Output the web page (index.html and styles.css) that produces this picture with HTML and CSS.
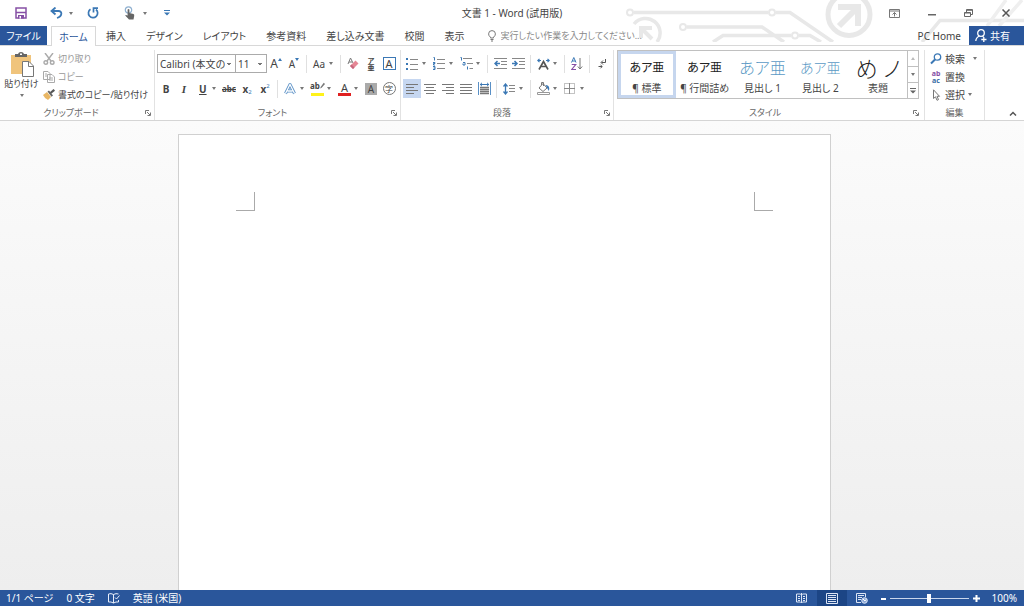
FILE: index.html
```html
<!DOCTYPE html>
<html lang="ja">
<head>
<meta charset="utf-8">
<meta name="viewport" content="width=device-width, initial-scale=1">
<title>文書 1 - Word</title>
<link rel="stylesheet" href="styles.css">
</head>
<body>
<header class="top">
  <svg class="circuit" viewBox="0 0 404 42" fill="none" stroke="#e8e8e8" stroke-width="3.500" aria-hidden="true">
    <path d="M14 12.500H148M156 12.500H170L213 42M67 27H142L164 42M93 42L103 35.500H171M179 35.500H190L201 42M302 42L320 20.500H404"/>
    <path d="M367 26L386 0M379 26L402 0" stroke="#efefef"/>
    <g stroke-width="2"><circle cx="10" cy="12.500" r="3"/><circle cx="152" cy="12.500" r="3"/><circle cx="63" cy="27" r="3"/><circle cx="175" cy="35.500" r="3"/></g>
    <circle cx="229" cy="14.500" r="21" stroke-width="5"/>
    <path d="M218 7H238V26M237 8L219 26" stroke-width="6"/>
    <path d="M14 24A14 14 0 0 1 37 42"/>
    <path d="M21 38V28H32M22 29L32 39" stroke-width="4"/>
  </svg>
  <div class="titlebar">
    <div class="quick">
      <button class="qbtn" aria-label="保存"><svg width="12" height="12" viewBox="0 0 12 12"><path d="M1 1H11V11H1Z" fill="#fff" stroke="#8650a5" stroke-width="1.500"/><path d="M1 5.500H11" stroke="#8650a5" stroke-width="1.500"/><path d="M3 8H9V11.500H3Z" fill="#8650a5"/><path d="M4.500 9H6V11.500H4.500Z" fill="#fff"/></svg></button>
      <button class="qbtn undo" aria-label="元に戻す"><svg width="13" height="12" viewBox="0 0 13 12" fill="none" stroke="#3b78b5" stroke-width="1.800"><path d="M5.500 .5L1.500 4L5.500 7.500M2 4H8.500C12.500 4 12.500 9.500 7 11"/></svg></button>
      <button class="qcaret" aria-label="元に戻す一覧"><i class="caret"></i></button>
      <button class="qbtn redo" aria-label="繰り返し"><svg width="12" height="12" viewBox="0 0 12 12" fill="none" stroke="#3b78b5" stroke-width="1.700"><path d="M3.500 2.200A4.600 4.600 0 1 0 9 2.500M6.500 5.500V1.200H11"/></svg></button>
      <button class="qbtn touch" aria-label="タッチ/マウス モードの切り替え"><svg width="12" height="14" viewBox="0 0 12 14"><circle cx="4.500" cy="4" r="3.200" fill="none" stroke="#8fb0d0" stroke-width="1.200"/><path d="M3.600 3.500Q4.500 2.500 5.400 3.500V7L9.500 8Q10.500 8.500 10.200 10L9.500 13.500H5L1.200 9.500Q1.500 8.300 3.600 9.500Z" fill="#666"/></svg></button>
      <button class="qcaret" aria-label="モード一覧"><i class="caret"></i></button>
      <button class="qbtn" aria-label="クイック アクセス ツール バーのカスタマイズ"><svg width="6" height="6" viewBox="0 0 6 6"><path d="M0 0H6V1H0ZM0 2.500H6L3 5.500Z" fill="#3b78b5"/></svg></button>
    </div>
    <h1 class="title">文書 1 - Word (試用版)</h1>
    <div class="window">
      <button aria-label="リボンの表示オプション"><svg width="11" height="9" viewBox="0 0 11 9" fill="none" stroke="#777"><path d="M.5 .5H10.500V8.500H.5ZM.5 2H10.500M5.500 7.500V3.500M3.500 5.500L5.500 3.500L7.500 5.500"/></svg></button>
      <button aria-label="最小化"><svg width="8" height="9" viewBox="0 0 8 9"><path d="M0 5H8V6.500H0Z" fill="#666"/></svg></button>
      <button aria-label="元に戻す (縮小)"><svg width="9" height="8" viewBox="0 0 9 8" fill="none" stroke="#666"><path d="M.5 3.500H6.500V7.500H.5ZM2.500 3V.5H8.500V5.500H7M2.500 1.300H8.500M.5 4H6.500"/></svg></button>
      <button aria-label="閉じる"><svg width="8" height="8" viewBox="0 0 8 8"><path d="M.5 .5L7.500 7.500M7.500 .5L.5 7.500" stroke="#555" stroke-width="1.500"/></svg></button>
    </div>
  </div>
  <nav class="tabs">
    <button class="file">ファイル</button>
    <button class="tab active">ホーム</button>
    <button class="tab">挿入</button>
    <button class="tab">デザイン</button>
    <button class="tab">レイアウト</button>
    <button class="tab">参考資料</button>
    <button class="tab">差し込み文書</button>
    <button class="tab">校閲</button>
    <button class="tab">表示</button>
    <label class="tell"><svg width="8" height="12" viewBox="0 0 8 12" fill="none" stroke="#777"><path d="M2.500 8V7.200Q.6 5.800 .6 3.900A3.400 3.300 0 0 1 7.400 3.900Q7.400 5.800 5.500 7.200V8ZM2.500 9.500H5.500M3 11H5"/></svg><input type="text" placeholder="実行したい作業を入力してください..." aria-label="操作アシスト"></label>
    <a class="account" href="#">PC Home</a>
    <button class="share"><svg width="12" height="13" viewBox="0 0 12 13" fill="none" stroke="#fff" stroke-width="1.300"><circle cx="6" cy="4" r="3.300"/><path d="M4.500 7Q1 8.500 .8 12M7.500 7.300L8.500 8M8.800 8V13M6.300 10.500H11.500"/></svg>共有</button>
  </nav>
</header>

<section class="ribbon" aria-label="リボン">
  <div class="group clipboard">
    <div class="body clip">
      <button class="paste"><svg width="24" height="25" viewBox="0 0 24 25"><path d="M1 3H21V22H1Z" fill="#f0c47c"/><path d="M5 2H8Q8.500 0 11 0T14 2H17V5H5Z" fill="#666"/><path d="M10 1.500H12V3H10Z" fill="#fff"/><path d="M12.500 9.500H19L23.500 14V24.500H12.500Z" fill="#fff" stroke="#777"/><path d="M18.500 9.500V14.500H23.500" fill="none" stroke="#777"/></svg><span>貼り付け</span><i class="caret"></i></button>
      <div class="stack">
        <button class="cmd off"><svg width="12" height="12" viewBox="0 0 12 12" fill="none" stroke="#aaa" stroke-width="1.400"><path d="M2 0L8 8M10 0L4 8"/><circle cx="2.800" cy="9.500" r="1.800"/><circle cx="9.200" cy="9.500" r="1.800"/></svg>切り取り</button>
        <button class="cmd off"><svg width="12" height="12" viewBox="0 0 12 12" fill="#fff" stroke="#aaa"><path d="M.5 .5H5L7 2.500V8.500H.5ZM4.500 3.500H9L11.500 6V11.500H4.500ZM2 3H4M2 5H4M6 7H10M6 9H10"/></svg>コピー</button>
        <button class="cmd"><svg width="12" height="12" viewBox="0 0 12 12"><path d="M0 6L4 3L8 8L5 11Q2 10 0 6Z" fill="#e9b765"/><path d="M4.500 2.500L6 1.500L10 6.500L8.500 7.700Z" fill="#666"/><path d="M7.500 4L11.300 .8" stroke="#555" stroke-width="2.200"/></svg>書式のコピー/貼り付け</button>
      </div>
    </div>
    <div class="caption"><span>クリップボード</span><button class="launch" aria-label="クリップボードの詳細"><svg width="6" height="6" viewBox="0 0 6 6"><path d="M.5 4V.5H4M2 2L5 5M5.500 2.500V5.500H2.500" fill="none" stroke="#777"/></svg></button></div>
  </div>

  <div class="group font">
    <div class="body rows">
      <div class="row">
        <select class="pick family" aria-label="フォント"><option>Calibri (本文の</option></select>
        <select class="pick size" aria-label="フォント サイズ"><option>11</option></select>
        <button class="tool" aria-label="フォント サイズの拡大"><span class="g12">A</span><svg class="up" width="4" height="3" viewBox="0 0 4 3"><path d="M0 3L2 0L4 3Z" fill="#3b78b5"/></svg></button>
        <button class="tool" aria-label="フォント サイズの縮小"><span class="g10">A</span><svg class="up" width="4" height="3" viewBox="0 0 4 3"><path d="M0 0L2 3L4 0Z" fill="#3b78b5"/></svg></button>
        <i class="sep"></i>
        <button class="split" aria-label="文字種の変換"><span class="g10">Aa</span><i class="caret"></i></button>
        <i class="sep"></i>
        <button class="tool" aria-label="書式のクリア"><svg width="12" height="13" viewBox="0 0 12 13"><path d="M1 7L3.500 1L6 6M2 5H5" fill="none" stroke="#777"/><path d="M3 9L8.500 3.500L11.500 6.500L6 12Z" fill="#e58795"/><path d="M3 9L4.500 7.500L7.500 10.500L6 12Z" fill="#c6677e"/></svg></button>
        <button class="tool ruby" aria-label="ルビ"><span>ア</span><span>亜</span></button>
        <button class="tool" aria-label="囲み線"><span class="boxed">A</span></button>
      </div>
      <div class="row">
        <button class="tool" aria-label="太字"><b class="g10">B</b></button>
        <button class="tool" aria-label="斜体"><em class="g11 serif">I</em></button>
        <button class="split" aria-label="下線"><b class="g10 under">U</b><i class="caret"></i></button>
        <button class="tool" aria-label="取り消し線"><b class="g8 strike">abc</b></button>
        <button class="tool" aria-label="下付き"><b class="g10">x</b><sub>2</sub></button>
        <button class="tool" aria-label="上付き"><b class="g10">x</b><sup>2</sup></button>
        <i class="sep"></i>
        <button class="split" aria-label="文字の効果"><svg width="12" height="12" viewBox="0 0 12 12"><path d="M1.500 10.500L6 1.500L10.500 10.500M3.500 8H8.500" fill="none" stroke="#5a90c6" stroke-width="3"/><path d="M1.500 10.500L6 1.500L10.500 10.500M3.500 8H8.500" fill="none" stroke="#fff" stroke-width="1.300"/></svg><i class="caret"></i></button>
        <button class="split" aria-label="蛍光ペンの色"><span class="ink yellow"><b>ab</b><svg width="5" height="8" viewBox="0 0 6 8"><path d="M0 7L1 5L4.500 0L6 1.500L2 6Z" fill="#777"/></svg></span><i class="caret"></i></button>
        <button class="split" aria-label="フォントの色"><span class="ink red"><span class="g11">A</span></span><i class="caret"></i></button>
        <button class="tool" aria-label="文字の網かけ"><span class="shade">A</span></button>
        <button class="tool" aria-label="囲い文字"><span class="ring">字</span></button>
      </div>
    </div>
    <div class="caption"><span>フォント</span><button class="launch" aria-label="フォントの詳細"><svg width="6" height="6" viewBox="0 0 6 6"><path d="M.5 4V.5H4M2 2L5 5M5.500 2.500V5.500H2.500" fill="none" stroke="#777"/></svg></button></div>
  </div>

  <div class="group paragraph">
    <div class="body rows">
      <div class="row">
        <button class="split" aria-label="箇条書き"><svg width="12" height="12" viewBox="0 0 12 12"><path d="M0 0H2V2H0ZM0 5H2V7H0ZM0 10H2V12H0Z" fill="#3b78b5"/><path d="M4 1.500H12M4 6.500H12M4 11.500H12" stroke="#888"/></svg><i class="caret"></i></button>
        <button class="split" aria-label="段落番号"><svg width="12" height="13" viewBox="0 0 12 13"><path d="M.5 .5H1.500V3.500M0 5.500H2V6.500H.5V8H2M0 9.500H2V12.500H0M.5 11H2" fill="none" stroke="#3b78b5"/><path d="M4 2.500H12M4 6.500H12M4 11.500H12" stroke="#888"/></svg><i class="caret"></i></button>
        <button class="split" aria-label="アウトライン"><svg width="14" height="13" viewBox="0 0 14 13"><path d="M.5 .5H1.500V3.500M3 5.500H5V8H3V6.500M7.500 9.500V12.500" fill="none" stroke="#3b78b5"/><path d="M3 1.500H12M7 6.500H13M9.500 11.500H13" stroke="#888"/></svg><i class="caret"></i></button>
        <i class="sep"></i>
        <button class="tool" aria-label="インデントを減らす"><svg width="13" height="11" viewBox="0 0 13 11"><path d="M0 .5H13M7 3.500H13M7 6.500H13M0 10.500H13" stroke="#888"/><path d="M6 5.500H1M3.500 3L1 5.500L3.500 8" stroke="#3b78b5" stroke-width="1.500" fill="none"/></svg></button>
        <button class="tool" aria-label="インデントを増やす"><svg width="13" height="11" viewBox="0 0 13 11"><path d="M0 .5H13M7 3.500H13M7 6.500H13M0 10.500H13" stroke="#888"/><path d="M0 5.500H5M2.500 3L5 5.500L2.500 8" stroke="#3b78b5" stroke-width="1.500" fill="none"/></svg></button>
        <i class="sep"></i>
        <button class="split" aria-label="拡張書式"><svg width="13" height="12" viewBox="0 0 13 12" fill="none"><path d="M2 11.500L6.500 3.500L11 11.500M3.500 8.500H9.500" stroke="#555" stroke-width="1.600"/><path d="M4 2.500H.8M2.500 .8L.8 2.500L2.500 4.200M9 2.500H12.200M10.500 .8L12.200 2.500L10.500 4.200" stroke="#3b78b5" stroke-width="1.200"/></svg><i class="caret"></i></button>
        <i class="sep"></i>
        <button class="tool" aria-label="並べ替え"><svg width="12" height="13" viewBox="0 0 12 13" fill="none"><path d="M.5 5.500L2.800 .5L5 5.500M1.300 4H4.300" stroke="#3b78b5"/><path d="M.7 7.500H4.700L.7 12.500H5" stroke="#8650a5" stroke-width="1.200"/><path d="M9 1V12M6.800 9.500L9 12L11.200 9.500" stroke="#777"/></svg></button>
        <i class="sep"></i>
        <button class="tool" aria-label="編集記号の表示/非表示"><svg width="8" height="11" viewBox="0 0 8 11" fill="none" stroke="#555"><path d="M7.500 1V4.500H3.500M5 2.500L3 4.500L5 6.500M4 8.500H.5M2.500 7L4.200 8.500L2.500 10.300"/></svg></button>
      </div>
      <div class="row">
        <button class="tool on" aria-label="左揃え"><svg width="12" height="10" viewBox="0 0 12 10"><path d="M0 .5H12M0 3.500H8M0 6.500H12M0 9.500H8" stroke="#777"/></svg></button>
        <button class="tool" aria-label="中央揃え"><svg width="12" height="10" viewBox="0 0 12 10"><path d="M0 .5H12M2 3.500H10M0 6.500H12M2 9.500H10" stroke="#777"/></svg></button>
        <button class="tool" aria-label="右揃え"><svg width="12" height="10" viewBox="0 0 12 10"><path d="M0 .5H12M4 3.500H12M0 6.500H12M4 9.500H12" stroke="#777"/></svg></button>
        <button class="tool" aria-label="両端揃え"><svg width="12" height="10" viewBox="0 0 12 10"><path d="M0 .5H12M0 3.500H12M0 6.500H12M0 9.500H12" stroke="#777"/></svg></button>
        <button class="tool" aria-label="均等割り付け"><svg width="13" height="13" viewBox="0 0 13 13" fill="none"><path d="M.5 0V13M12.500 0V13" stroke="#5a90c6"/><path d="M2 5.500H11M2 7.500H11M2 9.500H11M2 11.500H11" stroke="#777" stroke-width="1.300"/><path d="M2 2.500H11M4 .8L2.200 2.500L4 4.200M9 .8L10.800 2.500L9 4.200" stroke="#3b78b5"/></svg></button>
        <i class="sep"></i>
        <button class="split" aria-label="行と段落の間隔"><svg width="12" height="12" viewBox="0 0 12 12" fill="none"><path d="M2.500 1V11M.5 3.500L2.500 1L4.500 3.500M.5 8.500L2.500 11L4.500 8.500" stroke="#3b78b5" stroke-width="1.300"/><path d="M6 2.500H12M6 5.500H12M6 8.500H12" stroke="#888"/></svg><i class="caret"></i></button>
        <i class="sep"></i>
        <button class="split" aria-label="塗りつぶし"><svg width="13" height="13" viewBox="0 0 13 13" fill="none"><path d="M2 6L6 1.500L10 6L6 9.500ZM4.500 3V.5H6.500V4" stroke="#777"/><path d="M8.500 3Q13.500 3.500 11.800 9Z" fill="#3b78b5"/><path d="M.5 10.500H12.500V12.500H.5Z" fill="#fff" stroke="#999"/></svg><i class="caret"></i></button>
        <button class="split" aria-label="罫線"><svg width="11" height="11" viewBox="0 0 11 11" fill="none" stroke="#888"><path d="M.5 .5H10.500V10.500H.5Z" stroke-dasharray="1 1"/><path d="M5.500 0V11M0 5.500H11"/></svg><i class="caret"></i></button>
      </div>
    </div>
    <div class="caption"><span>段落</span><button class="launch" aria-label="段落の詳細"><svg width="6" height="6" viewBox="0 0 6 6"><path d="M.5 4V.5H4M2 2L5 5M5.500 2.500V5.500H2.500" fill="none" stroke="#777"/></svg></button></div>
  </div>

  <div class="group styles">
    <div class="body">
      <div class="gallery">
        <button class="style chosen"><span class="sample">あア亜</span><span>¶ 標準</span></button>
        <button class="style"><span class="sample">あア亜</span><span>¶ 行間詰め</span></button>
        <button class="style"><span class="sample h1">あア亜</span><span>見出し 1</span></button>
        <button class="style"><span class="sample h2">あア亜</span><span>見出し 2</span></button>
        <button class="style"><span class="sample big">め ノ</span><span>表題</span></button>
        <div class="scroll">
          <button aria-label="前の行" disabled><i class="caret flip"></i></button>
          <button aria-label="次の行"><i class="caret"></i></button>
          <button aria-label="その他"><svg width="6" height="6" viewBox="0 0 6 6"><path d="M0 0H6V1H0ZM0 2.500H6L3 5.500Z" fill="#666"/></svg></button>
        </div>
      </div>
    </div>
    <div class="caption"><span>スタイル</span><button class="launch" aria-label="スタイルの詳細"><svg width="6" height="6" viewBox="0 0 6 6"><path d="M.5 4V.5H4M2 2L5 5M5.500 2.500V5.500H2.500" fill="none" stroke="#777"/></svg></button></div>
  </div>

  <div class="group editing">
    <div class="body stack">
      <button class="cmd"><svg width="12" height="12" viewBox="0 0 12 12" fill="none" stroke="#3b78b5"><circle cx="7.500" cy="4" r="3.200" stroke-width="1.300"/><path d="M5 6.500L1 10.500" stroke-width="2"/></svg>検索<i class="caret far"></i></button>
      <button class="cmd"><span class="swap"><b>ab</b><b>ac</b></span>置換</button>
      <button class="cmd"><svg width="12" height="12" viewBox="0 0 12 12" fill="#fff" stroke="#777"><path d="M3.500 .8V9.500L5.500 7.800L7 11.300L8.500 10.600L7 7.300H9.500Z"/></svg>選択<i class="caret"></i></button>
    </div>
    <div class="caption"><span>編集</span></div>
  </div>
  <button class="collapse" aria-label="リボンを折りたたむ"><svg width="8" height="5" viewBox="0 0 8 5"><path d="M1 4.500L4 1.500L7 4.500" fill="none" stroke="#555" stroke-width="1.500"/></svg></button>
</section>

<main class="workspace">
  <article class="page" contenteditable="true" aria-label="文書"><i class="mark left"></i><i class="mark right"></i></article>
</main>

<footer class="status">
  <span>1/1 ページ</span>
  <span>0 文字</span>
  <button class="proof" aria-label="文章校正"><svg width="12" height="11" viewBox="0 0 12 11" fill="none" stroke="#e8eefa"><path d="M5.500 1.500Q3 0 .5 1V9Q3 8.500 5.500 10Q8 8.500 10.500 9V7M5.500 1.500V10M5.500 1.500Q8 0 10.500 1M7 4.500L8.500 6L11.500 2.500"/></svg></button>
  <span>英語 (米国)</span>
  <div class="views">
    <button aria-label="閲覧モード"><svg width="11" height="10" viewBox="0 0 11 10" fill="none" stroke="#dce5f5"><path d="M.5 1H4.500L5.500 2L6.500 1H10.500V9H6.500L5.500 10L4.500 9H.5ZM5.500 0V10M2 3.500H4M2 5.500H4M2 7.500H4M7 3.500H9M7 5.500H9M7 7.500H9"/></svg></button>
    <button class="current" aria-label="印刷レイアウト"><svg width="12" height="11" viewBox="0 0 12 11" fill="none" stroke="#dce5f5"><path d="M.5 .5H11.500V10.500H.5ZM2 2.500H10M2 4.500H10M2 6.500H10M2 8.500H10"/></svg></button>
    <button aria-label="Web レイアウト"><svg width="12" height="11" viewBox="0 0 12 11" fill="none" stroke="#dce5f5"><path d="M5 9.500H.5V.5H9.500V4M2 2.500H8M2 4.500H6M2 6.500H5"/><circle cx="8.500" cy="7.500" r="2.800" fill="#8fabd8"/><path d="M7 6L9 8L10 6.500" stroke="#fff"/></svg></button>
  </div>
  <div class="zoom">
    <button aria-label="縮小"><svg width="5" height="7" viewBox="0 0 5 7"><path d="M0 3H5V5H0Z" fill="#fff"/></svg></button>
    <input type="range" min="0" max="200" value="100" aria-label="ズーム">
    <button aria-label="拡大"><svg width="7" height="7" viewBox="0 0 7 7"><path d="M0 3.500H7M3.500 0V7" stroke="#fff" stroke-width="2"/></svg></button>
  </div>
  <span>100%</span>
</footer>
</body>
</html>
```

FILE: styles.css
```css
* { box-sizing: border-box; }

body {
  display: flex;
  flex-direction: column;
  height: 100vh;
  margin: 0;
  overflow: hidden;
  background: #fff;
  color: #444;
  font: 10px/14px "Noto Sans", "Noto Sans CJK JP", sans-serif;
  font-feature-settings: "palt";
}

button, input, select {
  margin: 0;
  padding: 0;
  border: 0;
  border-radius: 0;
  background: none;
  color: inherit;
  font: inherit;
  font-feature-settings: inherit;
}

button {
  display: flex;
  align-items: center;
  justify-content: center;
  white-space: nowrap;
}

svg { display: block; flex: none; }
a { color: inherit; text-decoration: none; }

.caret {
  flex: none;
  border: 2px solid transparent;
  border-top: 3px solid #777;
  border-bottom: 0;
}
.caret.flip { border-top: 0; border-bottom: 3px solid #bbb; }

/* Title bar */
.top { position: relative; flex: none; }
.circuit { position: absolute; top: 0; right: 0; width: 404px; height: 42px; }
.titlebar, .tabs { position: relative; display: flex; }
.titlebar {
  display: grid;
  grid-template-columns: 1fr auto 1fr;
  align-items: center;
  height: 26px;
}
.quick { display: flex; align-items: center; padding-left: 12px; }
.qbtn { width: 18px; height: 22px; }
.qbtn.undo { margin-left: 17px; }
.qbtn.redo { margin-left: 7px; }
.qbtn.touch { margin-left: 19px; }
.qcaret { width: 12px; height: 22px; }
.qcaret + .qbtn:last-child { margin-left: 7px; }
.title { margin: 0; font-size: 10px; font-weight: 400; }
.window { display: flex; justify-content: flex-end; }
.window button { width: 37px; height: 24px; }

/* Tabs */
.tabs { align-items: stretch; height: 20px; border-bottom: 1px solid #d8d8d8; }
.file { width: 47px; margin-right: 4px; background: #2a569b; color: #fff; }
.tab { padding: 0 10px; }
.tab.active {
  width: 45px;
  height: 20px;
  border: 1px solid #d8d8d8;
  border-bottom: 0;
  background: #fff;
  color: #2a569b;
}
.tell { display: flex; flex: 1; align-items: center; gap: 5px; padding-left: 13px; font-size: 9px; }
.tell input { flex: 1; max-width: 160px; min-width: 0; height: 18px; }
.tell input::placeholder { color: #888; opacity: 1; }
.account { align-self: center; margin-right: 8px; }
.share { gap: 3px; width: 55px; padding-right: 8px; background: #2a569b; color: #fff; }

/* Ribbon */
.ribbon { display: flex; flex: none; height: 75px; padding-top: 4px; border-bottom: 1px solid #d5d5d5; }
.group { display: flex; flex-direction: column; border-right: 1px solid #e2e2e2; }
.body { flex: 1; min-height: 0; }
.clipboard { width: 155px; }
.font { width: 246px; padding-left: 2px; }
.paragraph { width: 213px; padding-left: 2px; }
.styles { flex: 1; min-width: 0; padding: 0 5px 0 3px; }
.editing { width: 60px; }
.caption { display: flex; align-items: center; height: 15px; color: #666; font-size: 9px; }
.caption span { flex: 1; text-align: center; }
.launch { width: 12px; height: 12px; }
.styles .launch { width: 6px; }

.clip { display: flex; }
.paste { flex: none; flex-direction: column; justify-content: flex-start; width: 43px; padding-top: 2px; font-size: 9px; }
.paste span { line-height: 14px; }
.paste .caret { margin-top: 3px; }
.stack { display: flex; flex-direction: column; gap: 1px; }
.cmd { justify-content: flex-start; gap: 3px; height: 17px; }
.clip .cmd { font-size: 9px; }
.cmd.off { color: #999; }
.far { margin-left: 5px; }
.editing .stack { padding-left: 5px; }
.swap { display: flex; flex-direction: column; width: 12px; font-size: 7px; line-height: 7px; color: #8650a5; }
.swap b:last-child { color: #3b6ea5; }

.rows { display: flex; flex-direction: column; gap: 6px; padding-top: 4px; }
.row { display: flex; align-items: center; height: 19px; }
.tool { position: relative; width: 18px; height: 19px; }
.tool.on { background: #c6d7f1; }
.split { width: 27px; height: 19px; justify-content: space-between; padding: 0 4px 0 3px; }
.sep { width: 1px; height: 18px; margin: 0 3px; background: #e0e0e0; }
.pick {
  height: 19px;
  padding: 0 10px 0 2px;
  border: 1px solid #ababab;
  background: linear-gradient(#777, #777) right 4px top 8px / 4px 1px no-repeat,
    linear-gradient(#777, #777) right 5px top 9px / 2px 1px no-repeat, #fff;
  appearance: none;
}
.family { width: 79px; }
.size { width: 32px; margin-left: -1px; }
.g8 { font-size: 8px; }
.g10 { font-size: 10px; }
.g11 { font-size: 11px; }
.g12 { font-size: 12px; }
.serif { font-family: "Liberation Serif", serif; font-weight: 700; }
.under { margin-left: 3px; text-decoration: underline; }
.strike { text-decoration: line-through; }
.up { align-self: flex-start; margin-top: 4px; }
sub, sup { font-size: 6px; line-height: 6px; color: #3b78b5; }
sub { align-self: flex-end; margin-bottom: 3px; }
sup { align-self: flex-start; margin-top: 4px; }
.ruby { flex-direction: column; font-size: 7px; line-height: 7px; font-weight: 700; }
.boxed { width: 13px; border: 1px solid #3b78b5; font-size: 11px; line-height: 11px; text-align: center; }
.shade { width: 12px; background: #aaa; font-size: 10px; line-height: 12px; text-align: center; }
.ring { width: 13px; border: 1px solid #777; border-radius: 50%; font-size: 8px; line-height: 11px; text-align: center; }
.ink { display: flex; justify-content: center; width: 13px; height: 14px; border-bottom: 3px solid; line-height: 11px; }
.ink b { font-size: 8px; line-height: 8px; }
.ink.yellow { border-color: #fff21a; }
.ink.red { border-color: #e02020; }

/* Style gallery */
.gallery { display: flex; height: 49px; border: 1px solid #c0c0c0; }
.style { flex: 1; flex-direction: column; min-width: 0; overflow: hidden; border: 3px solid transparent; }
.style.chosen { border-color: #c6d6ee; }
.sample { display: flex; align-items: center; height: 26px; color: #222; font-size: 12px; }
.sample.h1 { color: #5b9ac5; font-size: 16px; font-weight: 300; }
.sample.h2 { color: #5b9ac5; font-size: 14px; font-weight: 300; }
.sample.big { font-size: 22px; line-height: 22px; font-weight: 300; }
.scroll { display: flex; flex-direction: column; width: 11px; border-left: 1px solid #c0c0c0; }
.scroll button { flex: 1; }
.scroll button + button { border-top: 1px solid #c0c0c0; }
.collapse { align-self: flex-end; width: 39px; height: 14px; padding-left: 16px; }

/* Document */
.workspace {
  display: flex;
  flex: 1;
  justify-content: center;
  min-height: 0;
  padding: 13px 15px 0 0;
  background: linear-gradient(#fbfbfb, #eee);
}
.page {
  display: flex;
  justify-content: space-between;
  width: 100%;
  max-width: 653px;
  padding: 57px;
  border: 1px solid #d0d0d0;
  border-bottom: 0;
  background: #fff;
}
.mark { width: 19px; height: 19px; border-bottom: 1px solid #aaa; }
.mark.left { border-right: 1px solid #aaa; }
.mark.right { border-left: 1px solid #aaa; }

/* Status bar */
.status {
  display: flex;
  flex: none;
  align-items: center;
  gap: 13px;
  height: 16px;
  padding: 0 7px 0 6px;
  background: #2a569b;
  color: #fff;
}
.views { display: flex; margin-left: auto; }
.views button { width: 30px; height: 16px; }
.views .current { background: #1c4585; }
.zoom { display: flex; align-items: center; gap: 4px; margin: 0 -1px 0 -9px; }
.zoom input { width: 79px; height: 16px; appearance: none; }
.zoom input::-webkit-slider-runnable-track { height: 1px; background: #c9d6ec; }
.zoom input::-webkit-slider-thumb { width: 4px; height: 9px; margin-top: -4px; background: #fff; appearance: none; }
```
